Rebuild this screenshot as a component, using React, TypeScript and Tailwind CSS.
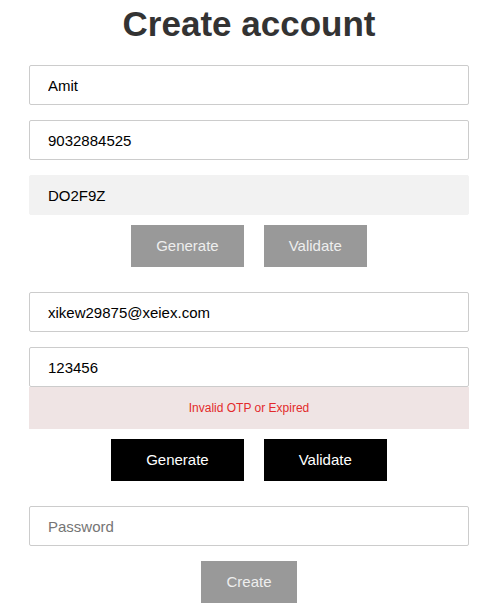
const inputCls =
  "block w-full h-10 rounded-[2px] border border-[#cccccc] bg-white pl-[18px] pr-3 text-[15px] text-black outline-none placeholder:text-[#757575]";

const Field = ({ value, placeholder, className = "" }: { value?: string; placeholder?: string; className?: string }) => (
  <input readOnly value={value ?? ""} placeholder={placeholder} className={`${inputCls} ${className}`} />
);

const Btn = ({ label, dark, wide }: { label: string; dark?: boolean; wide?: boolean }) => (
  <button
    className={`h-[42px] text-[15px] ${wide ? "px-[35px]" : "px-[25px]"} ${
      dark ? "bg-black text-white" : "bg-[#999999] text-[#eeeeee]"
    }`}>
    {label}
  </button>
);

export default function App() {
  return (
    <div className="min-h-screen bg-white font-['Liberation_Sans',Arial,sans-serif]">
      <div className="ml-[29px] w-[440px]">
        <h1 className="pt-[2px] h-[65px] text-center text-[35px] font-bold leading-[44px] text-[#333333]">
          Create account
        </h1>

        <Field value="Amit" />
        <Field value="9032884525" className="mt-[15px]" />
        <input
          readOnly
          disabled
          value="DO2F9Z"
          className="mt-[15px] block h-10 w-full rounded-[2px] border border-[#f2f2f2] bg-[#f2f2f2] pl-[18px] text-[15px] text-black outline-none"
        />
        <div className="mt-[10px] flex justify-center gap-5">
          <Btn label="Generate" />
          <Btn label="Validate" />
        </div>

        <Field value="xikew29875@xeiex.com" className="mt-[25px]" />
        <Field value="123456" className="mt-[15px]" />
        <div className="flex h-[42px] items-center justify-center bg-[#efe4e4] text-[12px] text-[#e32b2b]">
          Invalid OTP or Expired
        </div>
        <div className="mt-[10px] flex justify-center gap-5">
          <Btn label="Generate" dark wide />
          <Btn label="Validate" dark wide />
        </div>

        <Field placeholder="Password" className="mt-[25px]" />
        <div className="mt-[15px] flex justify-center">
          <Btn label="Create" />
        </div>
      </div>
    </div>
  );
}
